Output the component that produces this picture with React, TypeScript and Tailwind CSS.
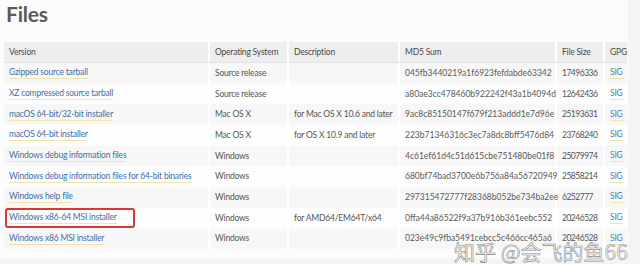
import React from "react";

const rows: [string, string, string, string, string][] = [
  ["Gzipped source tarball", "Source release", "", "045fb3440219a1f6923fefdabde63342", "17496336"],
  ["XZ compressed source tarball", "Source release", "", "a80ae3cc478460b922242f43a1b4094d", "12642436"],
  ["macOS 64-bit/32-bit installer", "Mac OS X", "for Mac OS X 10.6 and later", "9ac8c85150147f679f213addd1e7d96e", "25193631"],
  ["macOS 64-bit installer", "Mac OS X", "for OS X 10.9 and later", "223b71346316c3ec7a8dc8bff5476d84", "23768240"],
  ["Windows debug information files", "Windows", "", "4c61ef61d4c51d615cbe751480be01f8", "25079974"],
  ["Windows debug information files for 64-bit binaries", "Windows", "", "680bf74bad3700e6b756a84a56720949", "25858214"],
  ["Windows help file", "Windows", "", "297315472777f28368b052be734ba2ee", "6252777"],
  ["Windows x86-64 MSI installer", "Windows", "for AMD64/EM64T/x64", "0ffa44a86522f9a37b916b361eebc552", "20246528"],
  ["Windows x86 MSI installer", "Windows", "", "023e49c9fba5491cebcc5c466cc465a6", "20246528"],
];

const cols = "grid grid-cols-[206px_79px_111px_157px_48px_22px]";

export default function App() {
  return (
    <div className="relative w-[640px] h-[264px] bg-[#f4f4f4] overflow-hidden text-[#555]" style={{ fontFamily: "Lato, 'Noto Sans CJK SC', sans-serif" }}>
      <div className="w-[628px] h-[258px] bg-[#fcfcfc] pl-[4px] pt-[1px]">
        <h1 className="text-[21px] leading-[26px] font-bold text-[#5a5a5a] pl-[2px] tracking-[-0.2px]">Files</h1>
        <div className="mt-[15px] w-[623px] text-[8.5px] tracking-[-0.2px]">
          <div className={`${cols} h-[21px] bg-[#eeeeee] text-[#4a4a4a] border-b border-[#e2e2e2]`}>
            {["Version", "Operating System", "Description", "MD5 Sum", "File Size", "GPG"].map((h, i) => (
              <div key={h} className={`flex items-center pl-[5px] whitespace-nowrap ${i < 5 ? "border-r-2 border-white" : ""}`}>{h}</div>
            ))}
          </div>
          {rows.map((r, idx) => (
            <div key={idx} className={`${cols} h-[20.7px] ${idx % 2 === 0 ? "bg-[#f7f7f7]" : "bg-[#fdfdfd]"}`}>
              <div className="relative flex items-center pl-[5px] border-r-2 border-white whitespace-nowrap">
                <span className="text-[#3f6fa6] border-b border-[#f3e3a8] leading-[11px]">{r[0]}</span>
                {idx === 7 && (
                  <div className="absolute left-[1px] top-[0px] w-[130px] h-[20px] border-2 border-[#d93636] rounded-[3px]" />
                )}
              </div>
              <div className="flex items-center pl-[5px] border-r-2 border-white whitespace-nowrap">{r[1]}</div>
              <div className="flex items-center pl-[5px] border-r-2 border-white whitespace-nowrap">{r[2]}</div>
              <div className="flex items-center pl-[5px] border-r-2 border-white whitespace-nowrap text-[#5a5a5a] tracking-[0px]">{r[3]}</div>
              <div className="flex items-center pl-[5px] border-r-2 border-white tracking-[-0.5px]">{r[4]}</div>
              <div className="flex items-center pl-[5px]">
                <span className="text-[#4a7fb8] border-b border-[#f3e3a8] leading-[11px]">SIG</span>
              </div>
            </div>
          ))}
        </div>
      </div>
      <div className="absolute left-[454px] top-[238px] text-[21px] leading-[26px] text-white/60 [-webkit-text-stroke:0.6px_#8a8a8a] whitespace-nowrap" style={{ fontFamily: "'Noto Sans CJK SC', sans-serif" }}>
        知乎 @会飞的鱼66
      </div>
    </div>
  );
}
